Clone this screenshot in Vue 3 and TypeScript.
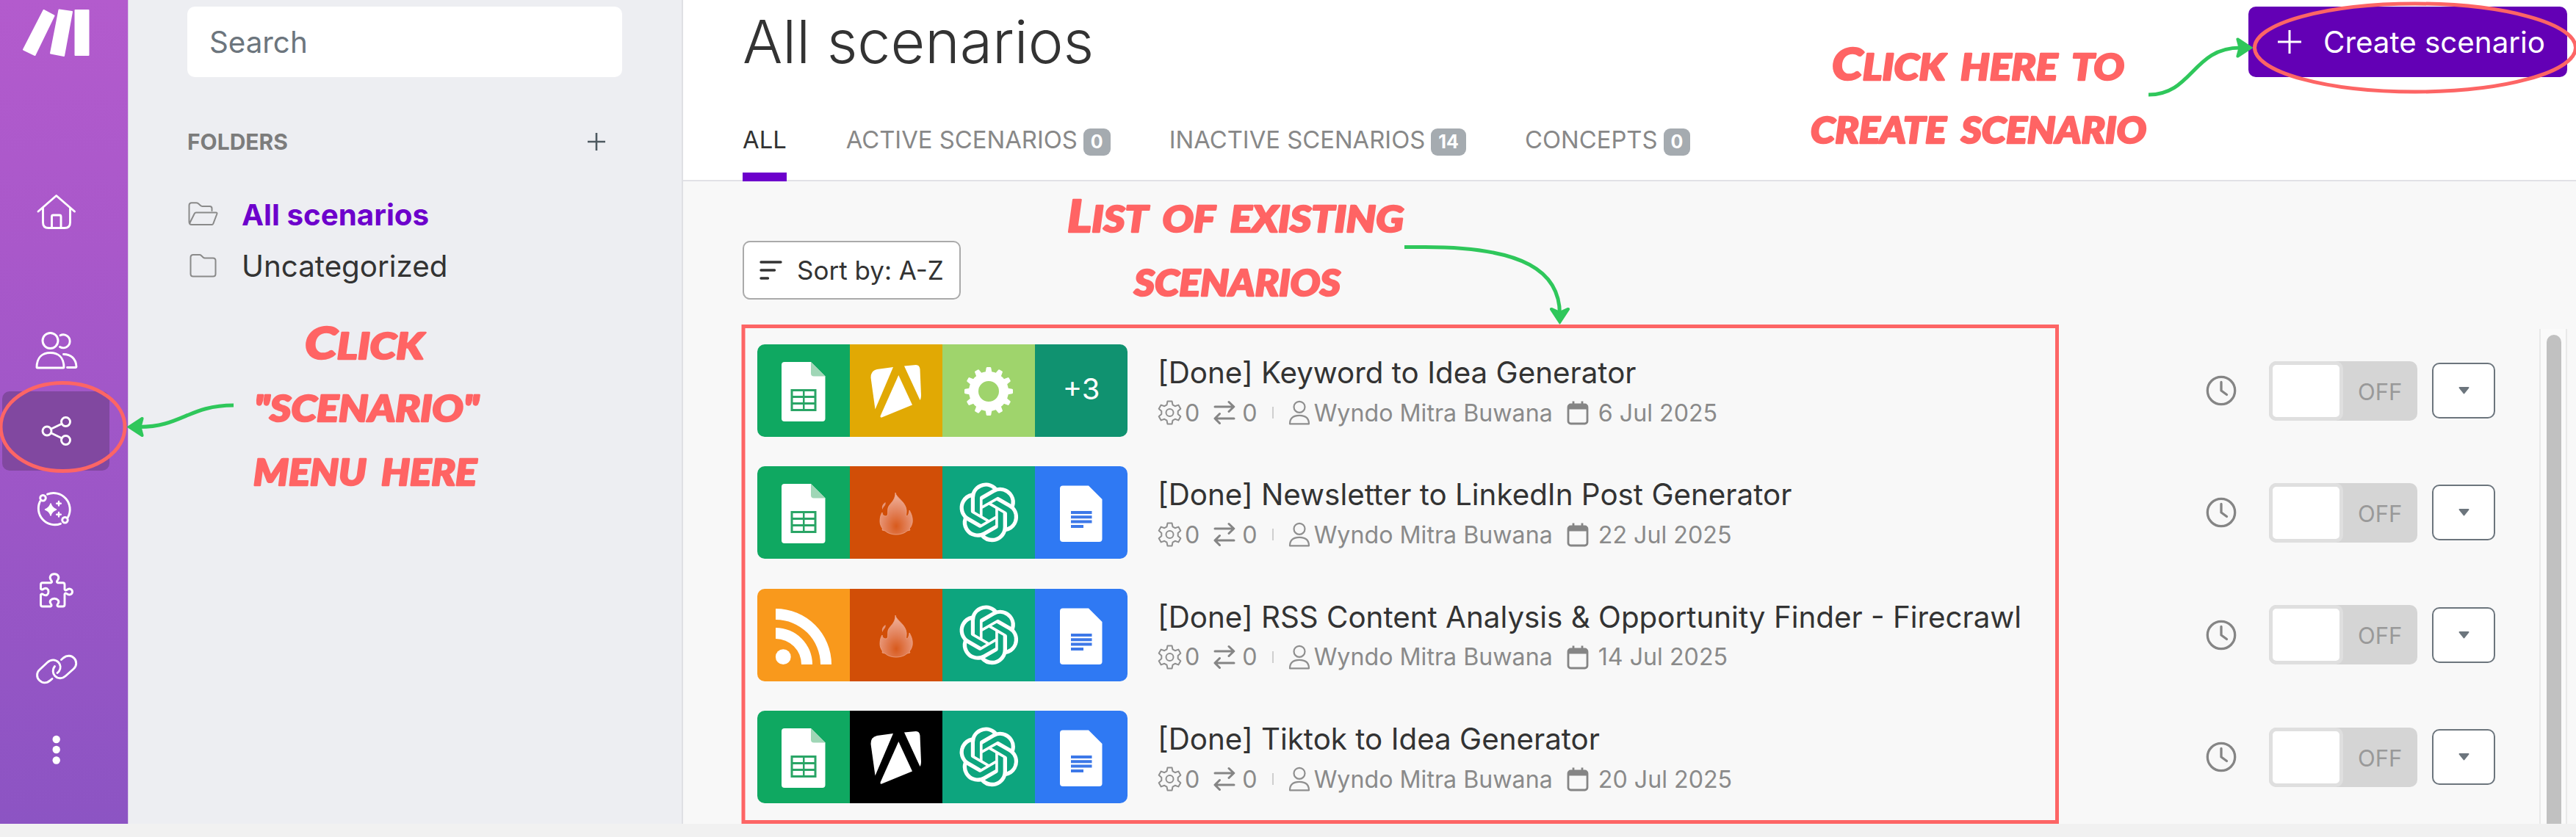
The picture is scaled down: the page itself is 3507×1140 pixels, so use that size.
<script setup lang="ts">
type Tile = 'sheets' | 'apify' | 'gear' | 'more' | 'fire' | 'openai' | 'docs' | 'rss'

interface Scenario {
  title: string
  date: string
  tiles: { kind: Tile; color: string }[]
}

const sheets = { kind: 'sheets' as Tile, color: '#0fa861' }
const fire = { kind: 'fire' as Tile, color: '#d14e07' }
const openai = { kind: 'openai' as Tile, color: '#0da57e' }
const docs = { kind: 'docs' as Tile, color: '#2f79f3' }

const scenarios: Scenario[] = [
  {
    title: '[Done] Keyword to Idea Generator',
    date: '6 Jul 2025',
    tiles: [sheets, { kind: 'apify', color: '#e1a904' }, { kind: 'gear', color: '#9fd46c' }, { kind: 'more', color: '#109270' }],
  },
  { title: '[Done] Newsletter to LinkedIn Post Generator', date: '22 Jul 2025', tiles: [sheets, fire, openai, docs] },
  {
    title: '[Done] RSS Content Analysis & Opportunity Finder - Firecrawl',
    date: '14 Jul 2025',
    tiles: [{ kind: 'rss', color: '#f9991c' }, fire, openai, docs],
  },
  {
    title: '[Done] Tiktok to Idea Generator',
    date: '20 Jul 2025',
    tiles: [sheets, { kind: 'apify', color: '#000000' }, openai, docs],
  },
]

const tabs = [
  { label: 'ALL', count: null, gap: 81 },
  { label: 'ACTIVE SCENARIOS', count: '0', gap: 80 },
  { label: 'INACTIVE SCENARIOS', count: '14', gap: 80 },
  { label: 'CONCEPTS', count: '0', gap: 0 },
]

const teeth = Array.from({ length: 12 }, (_, i) => i * 30)

const notes = [
  { first: 'C', rest: 'lick', x: 415, y: 489, w: 162 },
  { first: '', rest: '"scenario"', x: 346, y: 574, w: 306 },
  { first: '', rest: 'menu here', x: 345, y: 661, w: 304 },
  { first: 'L', rest: 'ist of existing', x: 1453, y: 316, w: 458 },
  { first: '', rest: 'scenarios', x: 1544, y: 403, w: 281 },
  { first: 'C', rest: 'lick here to', x: 2494, y: 109, w: 398 },
  { first: '', rest: 'create scenario', x: 2465, y: 195, w: 457 },
]
</script>

<template>
  <div class="page">
    <div class="app">
      <nav class="rail">
        <svg class="rail-icons" width="174" height="1122" viewBox="0 0 174 1122" fill="none" stroke="#fff" stroke-width="2.9" stroke-linecap="round" stroke-linejoin="round">
          <g fill="#fff" stroke-width="2">
            <path d="M59.500 14l14 7.500-26 53.500-15.500-7.500z" />
            <path d="M80.500 13.500l17.500 2.500-11 60-18-3.500z" />
            <path d="M102.500 14h18v61h-18z" />
          </g>
          <path d="M52 288l24.700-21.500L101.500 288M58.500 283v20q0 7.500 7.500 7.500h22q7.500 0 7.500-7.500v-20M70.500 310v-15q0-2 2-2h8.500q2 0 2 2v15" />
          <g>
            <circle cx="68.500" cy="464" r="10.500" />
            <path d="M50 500.500C50 486.500 58 480.500 68.500 480.500s18.500 6 18.500 20q0 .500-1 .500H51q-1 0-1-.500z" />
            <path d="M82 456.800a9 9 0 1 1-.5 15.700M86.500 482.500c10 0 17 6 17.500 17q0 1-1 1H91.500" />
          </g>
          <rect class="selected" x="3" y="533" width="146" height="108" rx="10" stroke="none" />
          <g>
            <circle cx="64" cy="587" r="6" />
            <circle cx="89.500" cy="574.500" r="6" />
            <circle cx="89.500" cy="599.500" r="6" />
            <path d="M69.500 584.200l14.500-7M69.500 589.800l14.500 7" />
          </g>
          <g>
            <circle cx="58.500" cy="678.300" r="3.800" />
            <circle cx="88.500" cy="708.300" r="3.800" />
            <path d="M64.500 673.200a22.300 22.300 0 0 1 28 31.300M82.500 713.300a22.300 22.300 0 0 1-28-30.500" />
            <path fill="#fff" stroke-width="1.500" d="M69 686q1.600 6 7.500 8-5.900 2-7.500 8-1.600-6-7.500-8 5.900-2 7.500-8z" />
            <path stroke-width="2.400" d="M80 683v5.600M77.200 685.800h5.600M80 698v5.600M77.200 700.800h5.600" />
          </g>
          <path d="M58 793.800h11.500c2-1 1-2.500-.2-4-2.800-4 0-8 4.700-8s7.500 4 4.700 8c-1.200 1.500-2.200 3-.2 4h7q2.500 0 2.500 2.500v6.500c1 2 2.500 1 4 0 3-2 6.500 0 6.500 3.200s-3.500 5.200-6.500 3.200c-1.500-1-3-2-4 0v14.300q0 2.500-2.500 2.500h-6.500c-2-1-1-2.500 0-3.800 2.500-3.500-.8-7-5-7s-7.500 3.500-5 7c1 1.300 2 2.800 0 3.800h-11q-2.500 0-2.500-2.500v-13.500c1-1.800 2.500-1 4 0 3.500 2 6.500-.2 6.500-4s-3-6-6.500-4c-1.500 1-3 1.800-4 0v-5.700q0-2.500 2.500-2.500z" />
          <g>
            <path d="M71 924.500l-2.500 2.200c-5 4.500-11 4-15-.2s-4-10.500.5-14.500l10.500-9.800c5-4.500 11.200-4.200 15-.2 3 3.200 3.600 8 1 12q-1.200 1.800-2.500 2.500" />
            <path d="M83.500 898.500l2.800-2.500c5-4 11-3.500 14.700.5s3.800 10.500-.8 14.500l-10.700 9.500c-5 4.500-11 4-14.800 0-3.200-3.500-3.500-9-.2-13" />
          </g>
          <g fill="#fff" stroke="none">
            <circle cx="76.700" cy="1007" r="5.200" />
            <circle cx="76.700" cy="1021" r="5.200" />
            <circle cx="76.700" cy="1035.500" r="5.200" />
          </g>
        </svg>
      </nav>

      <aside class="folders">
        <div class="search">Search</div>
        <div class="folders-head">
          <span>FOLDERS</span>
          <svg width="26" height="26" viewBox="0 0 26 26" stroke="#4d5960" stroke-width="2.600"><path d="M1 13h24M13 1v24" /></svg>
        </div>
        <div class="folder active">
          <svg width="42" height="36" viewBox="0 0 42 36" fill="none" stroke="#8a8a8a" stroke-width="2" stroke-linejoin="round" stroke-linecap="round">
            <path d="M33.500 13V10q0-3-3-3H20.500q-1.500 0-3-1.500l-2.500-2.300q-1.200-1-3-1H6q-3.500 0-3.500 3.500V28q0 4 3.500 4h27.500q1.200 0 1.800-1.300l5-13.200q.7-2-1.300-2H12q-1.700 0-2.300 1.500L3.200 30" />
          </svg>
          <span>All scenarios</span>
        </div>
        <div class="folder">
          <svg width="42" height="36" viewBox="0 0 42 36" fill="none" stroke="#8a8a8a" stroke-width="2" stroke-linejoin="round">
            <path d="M8 3h8.500q1.500 0 2.700 1.200l2.300 2.300Q22.500 7.500 24 7.500h11q3.500 0 3.500 3.500v18q0 3.500-3.500 3.500H8q-3.500 0-3.500-3.500V6.500Q4.500 3 8 3z" />
          </svg>
          <span>Uncategorized</span>
        </div>
      </aside>

      <main class="main">
        <header class="header">
          <div class="title-row">
            <h1>All scenarios</h1>
            <button class="create">
              <svg width="34" height="34" viewBox="0 0 34 34" stroke="#fff" stroke-width="3"><path d="M1 17h32M17 1v32" /></svg>
              <span>Create scenario</span>
            </button>
          </div>
          <div class="tabs">
            <div v-for="(t, i) in tabs" :key="t.label" class="tab" :class="{ current: i === 0 }" :style="{ marginRight: t.gap + 'px' }">
              <span>{{ t.label }}</span>
              <b v-if="t.count !== null" class="badge">{{ t.count }}</b>
            </div>
          </div>
        </header>

        <div class="toolbar">
          <button class="sort">
            <svg width="32" height="28" viewBox="0 0 32 28" stroke="#333" stroke-width="3.400" stroke-linecap="round"><path d="M2 3h27M2 14h18.500M2 25h9.500" /></svg>
            <span>Sort by: A-Z</span>
          </button>
        </div>

        <div class="content">
          <div class="list">
            <div v-for="s in scenarios" :key="s.title" class="row">
              <div class="tiles">
                <div v-for="(t, i) in s.tiles" :key="i" class="tile" :style="{ background: t.color }">
                  <span v-if="t.kind === 'more'">+3</span>
                  <svg v-else width="126" height="126" viewBox="0 0 126 126">
                    <g v-if="t.kind === 'sheets'">
                      <path fill="#fff" d="M37 24H73L92.500 43.500V101q0 4-4 4H37q-4 0-4-4V28q0-4 4-4z" />
                      <path fill="#9fd6b6" d="M73 24L92.500 43.500H77q-4 0-4-4z" />
                      <path fill="#2aa566" d="M45.500 61H80.500V91H45.500z" />
                      <path fill="#fff" d="M48.500 64h13.500v6H48.500zM64.500 64H77.500v6H64.500zM48.500 73h13.500v6H48.500zM64.500 73H77.500v6H64.500zM48.500 82h13.500v6H48.500zM64.500 82H77.500v6H64.500z" />
                    </g>
                    <g v-else-if="t.kind === 'apify'" fill="#fff">
                      <path d="M59 31L34.500 88.500 28.600 46Q28 36 37 34z" />
                      <path d="M74 29.500L90 28q5 0 5.500 6L97 69q0 5-1.500 7z" />
                      <path d="M66.300 42L85 82.600 43.500 99.600q-3 .500-1.500-3z" />
                    </g>
                    <g v-else-if="t.kind === 'gear'">
                      <circle cx="63" cy="64" r="20.500" fill="none" stroke="#fff" stroke-width="13" />
                      <path v-for="a in teeth" :key="a" fill="#fff" d="M58 42L59.700 32Q60 31 61 31H65Q66 31 66.300 32L68 42z" :transform="`rotate(${a} 63 64)`" />
                    </g>
                    <g v-else-if="t.kind === 'fire'">
                      <defs>
                        <radialGradient id="flame" cx=".5" cy=".8" r=".75">
                          <stop offset="0" stop-color="#d85a1c" />
                          <stop offset=".45" stop-color="#e28058" />
                          <stop offset="1" stop-color="#efb09a" />
                        </radialGradient>
                      </defs>
                      <path fill="url(#flame)" stroke="#eda68c" stroke-width=".8" d="M62 36c1 7 14 12 15 24 .3 4-1 6 0 8 2 0 3.500-3 4-8 3 5 5 11 4 17-1 4-2 6-4 8l1 2-4 1c-3 3-9 5-15 5s-12-2-15-5l-4-1 .500-2c-2-3-3.500-6-3.500-10 0-5 1-9 3-12 0 3 2 5 5 5 4 0 2-6 3-11C54 50 62 48 62 36z" />
                      <path fill="#e79678" d="M48.500 49c1 5-3 5-4 10-2-5 1-8 4-10z" />
                    </g>
                    <g v-else-if="t.kind === 'openai'" transform="translate(23 22.500) scale(3.360)">
                      <path
                        fill="#fff"
                        d="M22.2819 9.8211a5.9847 5.9847 0 0 0-.5157-4.9108 6.0462 6.0462 0 0 0-6.5098-2.9A6.0651 6.0651 0 0 0 4.9807 4.1818a5.9847 5.9847 0 0 0-3.9977 2.9 6.0462 6.0462 0 0 0 .7427 7.0966 5.98 5.98 0 0 0 .511 4.9107 6.051 6.051 0 0 0 6.5146 2.9001A5.9847 5.9847 0 0 0 13.2599 24a6.0557 6.0557 0 0 0 5.7718-4.2058 5.9894 5.9894 0 0 0 3.9977-2.9001 6.0557 6.0557 0 0 0-.7475-7.0729zm-9.022 12.6081a4.4755 4.4755 0 0 1-2.8764-1.0408l.1419-.0804 4.7783-2.7582a.7948.7948 0 0 0 .3927-.6813v-6.7369l2.02 1.1686a.071.071 0 0 1 .038.052v5.5826a4.504 4.504 0 0 1-4.4945 4.4944zm-9.6607-4.1254a4.4708 4.4708 0 0 1-.5346-3.0137l.142.0852 4.783 2.7582a.7712.7712 0 0 0 .7806 0l5.8428-3.3685v2.3324a.0804.0804 0 0 1-.0332.0615L9.74 19.9502a4.4992 4.4992 0 0 1-6.1408-1.6464zM2.3408 7.8956a4.485 4.485 0 0 1 2.3655-1.9728V11.6a.7664.7664 0 0 0 .3879.6765l5.8144 3.3543-2.0201 1.1685a.0757.0757 0 0 1-.071 0l-4.8303-2.7865A4.504 4.504 0 0 1 2.3408 7.872zm16.5963 3.8558L13.1038 8.364 15.1192 7.2a.0757.0757 0 0 1 .071 0l4.8303 2.7913a4.4944 4.4944 0 0 1-.6765 8.1042v-5.6772a.79.79 0 0 0-.407-.667zm2.0107-3.0231l-.142-.0852-4.7735-2.7818a.7759.7759 0 0 0-.7854 0L9.409 9.2297V6.8974a.0662.0662 0 0 1 .0284-.0615l4.8303-2.7866a4.4992 4.4992 0 0 1 6.6802 4.66zM8.3065 12.863l-2.02-1.1638a.0804.0804 0 0 1-.038-.0567V6.0742a4.4992 4.4992 0 0 1 7.3757-3.4537l-.142.0805L8.704 5.459a.7948.7948 0 0 0-.3927.6813zm1.0976-2.3654l2.602-1.4998 2.6069 1.4998v2.9994l-2.5974 1.4997-2.6067-1.4997Z"
                      />
                    </g>
                    <g v-else-if="t.kind === 'docs'">
                      <path fill="#fff" d="M38 26.500H73L91.500 45V99q0 4-4 4H38q-4 0-4-4V30.500q0-4 4-4z" />
                      <path fill="#3d78e8" d="M49 61H77.500v4H49zM49 67.300H77.500v4H49zM49 73.600H77.500v4H49zM49 80H66v4H49z" />
                    </g>
                    <g v-else fill="#fff">
                      <path d="M25 27A76 76 0 0 1 101 103H86A61 61 0 0 0 25 42z" />
                      <path d="M25 53A50 50 0 0 1 75 103H60A35 35 0 0 0 25 68z" />
                      <circle cx="35.300" cy="92.700" r="10.400" />
                    </g>
                  </svg>
                </div>
              </div>

              <div class="info">
                <div class="name">{{ s.title }}</div>
                <div class="meta">
                  <svg width="33" height="34" viewBox="0 0 33 34" fill="none" stroke="#8f8f8f" stroke-width="2" stroke-linejoin="round">
                    <path d="M13.500 1.500h6l1 4.800 3.200 1.900 4.600-1.600 3 5.200-3.600 3.200v4l3.600 3.200-3 5.200-4.600-1.600-3.200 1.900-1 4.800h-6l-1-4.800-3.200-1.900-4.600 1.600-3-5.200 3.600-3.200v-4L1.700 11.800l3-5.200 4.600 1.600 3.200-1.900z" />
                    <circle cx="16.500" cy="17" r="5" />
                  </svg>
                  <span class="ops">0</span>
                  <svg width="30" height="34" viewBox="0 0 30 34" fill="none" stroke="#858585" stroke-width="3" stroke-linejoin="round" stroke-linecap="round">
                    <path d="M2 9h25.500M21 2.500L27.800 9 21 15.500M28 25H2.500M8.500 18.500L2 25l6.500 6.500" />
                  </svg>
                  <span class="transfers">0</span>
                  <i class="sep"></i>
                  <svg width="30" height="34" viewBox="0 0 30 34" fill="none" stroke="#8f8f8f" stroke-width="2.200" stroke-linejoin="round">
                    <circle cx="15" cy="9.300" r="7.500" />
                    <path d="M2 32.300C2 24.500 7 20.800 15 20.800s13 3.700 13 11.500z" />
                  </svg>
                  <span class="author">Wyndo Mitra Buwana</span>
                  <svg width="30" height="34" viewBox="0 0 30 34" fill="none" stroke="#858585" stroke-width="2.800">
                    <rect x="2" y="6" width="26" height="26" rx="3.500" />
                    <path d="M2 6h26v6.500H2z" fill="#858585" stroke="none" />
                    <path d="M9 1.500v6M21 1.500v6" />
                  </svg>
                  <span class="date">{{ s.date }}</span>
                </div>
              </div>

              <div class="controls">
                <svg width="42" height="42" viewBox="0 0 42 42" fill="none" stroke="#858585" stroke-width="3.300" stroke-linecap="round" stroke-linejoin="round">
                  <circle cx="21" cy="21" r="18.700" />
                  <path d="M21 9.500V21l7.500 5.500" />
                </svg>
                <div class="toggle">
                  <div class="knob"></div>
                  <span>OFF</span>
                </div>
                <button class="menu">
                  <svg width="17" height="12" viewBox="0 0 17 12"><path d="M2.500 2h12L8.500 9.500z" fill="#6c757d" stroke="#6c757d" stroke-width="2" stroke-linejoin="round" /></svg>
                </button>
              </div>
            </div>
          </div>
          <div class="scrollbar"><div class="thumb"></div></div>
        </div>
      </main>
    </div>

    <svg class="annotations" width="3507" height="1140" viewBox="0 0 3507 1140" fill="none">
      <g stroke="#fd6565" stroke-width="5">
        <rect x="1012" y="444.500" width="1788.500" height="675" />
        <ellipse cx="85.500" cy="581.500" rx="84.500" ry="60" />
        <ellipse cx="3288" cy="65" rx="218.500" ry="60" />
      </g>
      <g stroke="#2fc75b" stroke-width="5">
        <path d="M318 552C258 552 246 581.500 190 581.500" />
        <path d="M1912 336.500H1940C2075 336.500 2123.500 370 2123.500 428" />
        <path d="M2925 129C2985 129 2985 65 3050 65" />
      </g>
      <g fill="#2fc75b" stroke="#2fc75b" stroke-width="2" stroke-linejoin="round">
        <path d="M174 581.500l19-12.500q2-.500 1.500 1.500l-3 11 3 11q.500 2-1.500 1.500z" />
        <path d="M2123.500 440.500l-12.500-19q-.500-2 1.500-1.500l11 5 11-5q2-.500 1.500 1.500z" />
        <path d="M3066 65l-19-12.500q-2-.500-1.500 1.500l3 11-3 11q-.500 2 1.500 1.500z" />
      </g>
      <g class="notes">
        <text v-for="n in notes" :key="n.first + n.rest" :x="n.x" :y="n.y" :textLength="n.w" lengthAdjust="spacingAndGlyphs"><tspan class="initial">{{ n.first }}</tspan>{{ n.rest }}</text>
      </g>
    </svg>
  </div>
</template>

<style>
body {
  background: #f1f1f1;
}
</style>

<style scoped>
* {
  box-sizing: border-box;
}
.page {
  position: relative;
  width: 3507px;
  height: 1140px;
  overflow: hidden;
  background: #f1f1f1;
  font-family: Inter, "Liberation Sans", sans-serif;
  color: #333;
}
.app {
  display: flex;
  height: 1122px;
}
button {
  font: inherit;
  border: 0;
  margin: 0;
  padding: 0;
}
svg {
  display: block;
  flex: none;
}
span {
  white-space: nowrap;
}
.rail {
  flex: none;
  width: 174px;
  background: linear-gradient(#b35bcd, #a958ca 30%, #8c54c3);
}
.selected {
  fill: #8148a0;
}
.folders {
  flex: none;
  width: 756px;
  padding: 9px 81px 0 80px;
  background: #edeef2;
  border-left: 1px solid #d9cbe6;
  border-right: 2px solid #dfe0e4;
}
.search {
  height: 96px;
  padding-left: 30px;
  border-radius: 10px;
  background: #fff;
  color: #6c757d;
  font-size: 40.300px;
  line-height: 98px;
}
.folders-head {
  display: flex;
  justify-content: space-between;
  align-items: center;
  height: 40px;
  margin-top: 68px;
  padding-right: 22px;
  color: #7c7c7c;
  font-size: 30px;
  font-weight: 700;
}
.folder {
  display: flex;
  align-items: center;
  height: 70px;
  color: #333;
  font-size: 40.300px;
}
.folder svg {
  margin-right: 32px;
}
.folder.active {
  margin-top: 44px;
  color: #6d00cc;
  font-weight: 700;
  font-size: 40.300px;
}
.main {
  flex: 1;
  display: flex;
  flex-direction: column;
  background: #f8f8f8;
}
.header {
  flex: none;
  height: 247px;
  padding-left: 81px;
  background: #fff;
  border-bottom: 2.500px solid #e2e2e6;
}
.title-row {
  display: flex;
  justify-content: space-between;
  height: 153px;
}
h1 {
  margin: 0;
  font-size: 80.700px;
  font-weight: 300;
  line-height: 114px;
}
.create {
  display: flex;
  align-items: center;
  width: 434px;
  height: 96px;
  margin: 9px 12px 0 0;
  padding-left: 39px;
  border-radius: 10px;
  background: #6300b5;
  color: #fff;
  font-size: 40.300px;
}
.create span {
  margin-left: 29px;
}
.tabs {
  display: flex;
  height: 94px;
}
.tab {
  display: flex;
  align-items: center;
  height: 94px;
  padding-bottom: 20px;
  color: #888;
  font-size: 32.800px;
}
.tab.current {
  color: #333;
  border-bottom: 12px solid #6d00cc;
  padding-bottom: 8px;
}
.badge {
  height: 37px;
  margin: 6px 0 0 8px;
  padding: 0 10px;
  border-radius: 9px;
  background: #a5abb0;
  color: #fff;
  font-size: 25px;
  line-height: 37px;
}
.toolbar {
  flex: none;
  height: 201px;
  padding: 81px 0 0 81px;
}
.sort {
  display: flex;
  align-items: center;
  width: 297px;
  height: 80px;
  padding-left: 21px;
  border: 2px solid #aaa;
  border-radius: 10px;
  background: #fff;
  color: #333;
  font-size: 35px;
}
.sort span {
  margin-left: 19px;
}
.content {
  flex: 1;
  min-height: 0;
  display: flex;
  justify-content: space-between;
  overflow: hidden;
}
.list {
  width: 2467px;
  padding: 21px 0 0 101px;
}
.row {
  display: flex;
  height: 166.400px;
}
.tiles {
  display: flex;
  flex: none;
  height: 126px;
  border-radius: 10px;
  overflow: hidden;
}
.tile {
  width: 126px;
  height: 126px;
  color: #fff;
  font-size: 40px;
  line-height: 122px;
  text-align: center;
}
.info {
  flex: 1;
  padding: 13px 0 0 41px;
}
.name {
  height: 52px;
  color: #333;
  font-size: 40.350px;
  line-height: 52px;
  white-space: nowrap;
}
.meta {
  display: flex;
  align-items: center;
  height: 56px;
  color: #8a8a8a;
  font-size: 32.200px;
}
.ops {
  margin: 0 19px 0 4px;
}
.transfers {
  margin-left: 9px;
}
.sep {
  width: 2px;
  height: 16px;
  margin: 0 20px;
  background: #cfcfcf;
}
.author {
  margin: 0 19px 0 5px;
}
.date {
  margin-left: 13px;
}
.controls {
  display: flex;
  flex: none;
  align-items: center;
  height: 126px;
}
.toggle {
  display: flex;
  align-items: center;
  width: 202px;
  height: 81px;
  margin: 0 20px 0 44px;
  border-radius: 10px;
  background: #d5d5d5;
  color: #999;
  font-size: 31px;
}
.knob {
  width: 101px;
  height: 81px;
  border: 5.500px solid #dfdfdf;
  border-radius: 10px;
  background: #fff;
}
.toggle span {
  margin: 2px 0 0 20px;
}
.menu {
  display: flex;
  align-items: center;
  justify-content: center;
  width: 86px;
  height: 76px;
  border: 2.500px solid #6c757d;
  border-radius: 10px;
  background: #fff;
}
.scrollbar {
  width: 38px;
  margin-right: 12px;
  padding: 8px 6px 0 8px;
  border: solid #e9e9e9;
  border-width: 0 2px;
  background: #fafafa;
}
.thumb {
  width: 20px;
  height: 100%;
  border-radius: 10px 10px 0 0;
  background: #c1c1c1;
}
.annotations {
  position: absolute;
  left: 0;
  top: 0;
}
.notes {
  fill: #ff6464;
  stroke: #ff6464;
  stroke-width: 2.500px;
  stroke-linejoin: round;
  font-family: Lato, "Liberation Sans", sans-serif;
  font-size: 49px;
  font-weight: 900;
  font-style: italic;
  word-spacing: 8px;
  text-transform: uppercase;
}
.initial {
  font-size: 60px;
}
</style>
